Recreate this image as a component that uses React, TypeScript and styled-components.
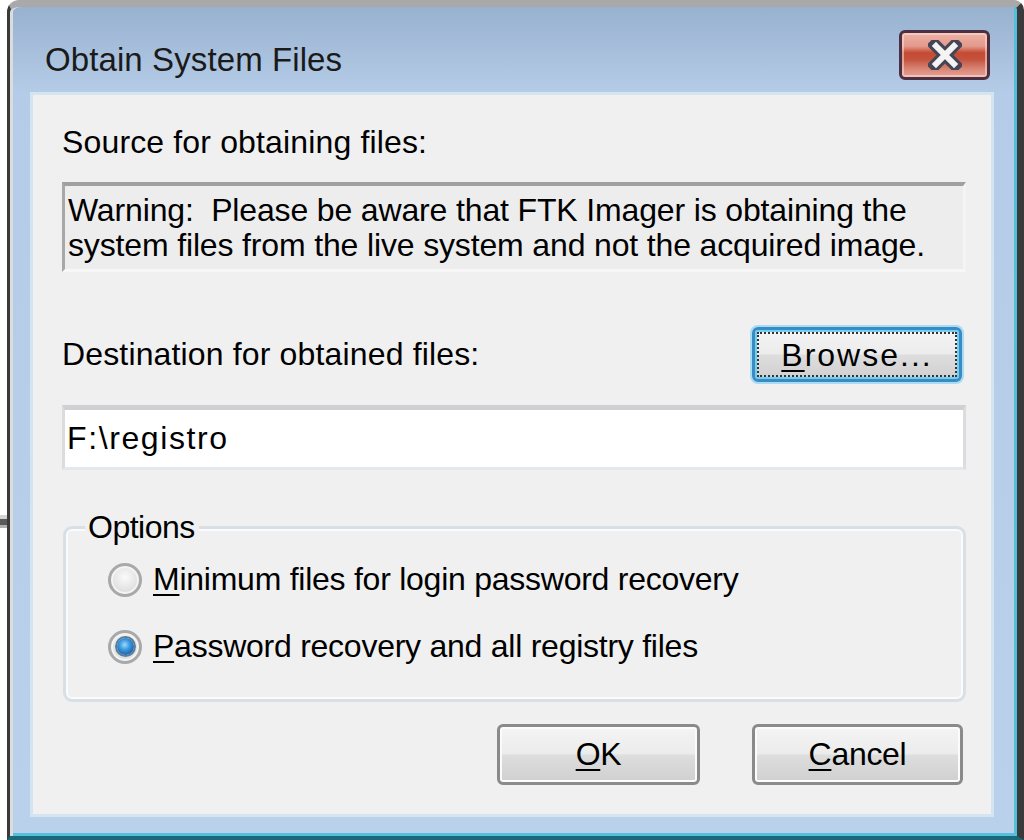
import React from "react";
import styled, { createGlobalStyle, css } from "styled-components";

const GlobalStyle = createGlobalStyle`
  html, body {
    margin: 0;
    padding: 0;
  }
  body {
    width: 1024px;
    height: 840px;
    overflow: hidden;
    background:
      linear-gradient(to bottom,
        transparent 0, transparent 515px,
        #d4d4d4 515px, #d4d4d4 519px,
        #5a5a5a 519px, #5a5a5a 525px,
        #b0b0b0 525px, #b0b0b0 528px,
        transparent 528px) no-repeat,
      #ffffff;
    font-family: "Liberation Sans", Arial, sans-serif;
  }
`;

const Window = styled.div`
  box-sizing: border-box;
  margin-left: 7px;
  width: 1017px;
  height: 840px;
  display: flex;
  flex-direction: column;
  border-top: 7px solid #a9a9a9;
  border-left: 3px solid #3a3a3a;
  border-right: 7px solid #3a3a3a;
  border-bottom: 4px solid #1a6878;
  border-top-left-radius: 12px;
  border-top-right-radius: 10px;
  background: linear-gradient(to bottom, #98b1cf 0px, #b4cce7 85px, #b9d1ea 100%);
  box-shadow: inset 3px 0 0 #dcdcdc, inset -3px -3px 0 #52c0dc;
  padding: 0 23px 19px 20px;
`;

const TitleBar = styled.div`
  height: 85px;
  flex: none;
  display: flex;
  align-items: flex-start;
  justify-content: space-between;
`;

const Title = styled.div`
  margin-top: 34px;
  margin-left: 15px;
  font-size: 33px;
  line-height: 38px;
  color: #1a1a1a;
  letter-spacing: 0.1px;
`;

const CloseButton = styled.div`
  box-sizing: border-box;
  margin-top: 23px;
  margin-right: 4px;
  width: 91px;
  height: 50px;
  border: 3px solid #4b2f42;
  border-radius: 6px;
  background: linear-gradient(
    to bottom,
    #eeb2a6 0%,
    #e39a8b 30%,
    #c44a33 45%,
    #c4533e 60%,
    #d78272 80%,
    #e6a397 100%
  );
  box-shadow: inset 0 0 0 2px rgba(255, 220, 210, 0.55);
  display: flex;
  align-items: center;
  justify-content: center;
`;

const Client = styled.div`
  flex: 1;
  box-sizing: border-box;
  background: #f0f0f0;
  border: 3px solid #d6e3f1;
  padding: 29px 25px 0 29px;
  display: flex;
  flex-direction: column;
`;

const Label = styled.div`
  font-size: 32px;
  line-height: 37px;
  color: #000;
  letter-spacing: 0.15px;
`;

const WarningBox = styled.div`
  box-sizing: border-box;
  margin-top: 21px;
  height: 90px;
  border-top: 4px solid #a0a0a0;
  border-left: 3px solid #a8a8a8;
  border-right: 3px solid #f4f4f4;
  border-bottom: 3px solid #f7f7f7;
  background: #ededed;
  padding: 7px 4px 0 3px;
  font-size: 32px;
  line-height: 35px;
  color: #000;
  letter-spacing: -0.15px;
  white-space: pre;
`;

const DestRow = styled.div`
  margin-top: 55px;
  display: flex;
  align-items: center;
  justify-content: space-between;
  padding-right: 4px;
`;

const buttonBase = css`
  box-sizing: border-box;
  height: 61px;
  border: 3px solid #8a8a8a;
  border-radius: 6px;
  background: linear-gradient(
    to bottom,
    #f4f4f4 0%,
    #ececec 48%,
    #dddddd 52%,
    #d0d0d0 100%
  );
  box-shadow: inset 0 0 0 2px #fbfbfb;
  font-family: "Liberation Sans", Arial, sans-serif;
  font-size: 32px;
  color: #000;
  letter-spacing: -0.3px;
  display: flex;
  align-items: center;
  justify-content: center;
  padding: 0;
`;

const BrowseButton = styled.button`
  ${buttonBase};
  width: 210px;
  height: 55px;
  border-color: #3a8ac4;
  box-shadow: 0 0 0 2px #a8dcf4, inset 0 0 0 2px #6fd0f2;
  outline: 2px dotted #333;
  outline-offset: -7px;
  padding-top: 2px;
  letter-spacing: 2px;
`;

const DialogButton = styled.button<{ $w: number }>`
  ${buttonBase};
  width: ${(p) => p.$w}px;
`;

const Mn = styled.span`
  text-decoration: underline;
  text-decoration-thickness: 2px;
  text-underline-offset: 4px;
`;

const Input = styled.div`
  box-sizing: border-box;
  margin-top: 23px;
  height: 65px;
  background: #fff;
  border: 3px solid #dadcdf;
  border-top: 5px solid #d0d0d2;
  border-bottom-color: #e3e8ee;
  display: flex;
  align-items: center;
  padding-left: 2px;
  font-size: 32px;
  color: #000;
  letter-spacing: 1.6px;
`;

const Group = styled.fieldset`
  box-sizing: border-box;
  margin: 39px 0 0 1px;
  padding: 15px 0 0 0;
  height: 193px;
  border: 3px solid #d8e0e6;
  border-radius: 9px;
  box-shadow: inset 0 0 0 2px #fafbfc;
  display: flex;
  flex-direction: column;
  gap: 30px;
`;

const Legend = styled.legend`
  margin-left: 19px;
  padding: 0 4px 0 3px;
  background: #f0f0f0;
  font-size: 32px;
  line-height: 37px;
  color: #000;
  letter-spacing: -0.5px;
`;

const RadioRow = styled.label`
  display: flex;
  align-items: center;
  gap: 11px;
  padding-left: 42px;
  font-size: 32px;
  line-height: 37px;
  color: #000;
  letter-spacing: -0.25px;
`;

const RadioCircle = styled.span<{ $checked?: boolean }>`
  box-sizing: border-box;
  flex: none;
  width: 34px;
  height: 34px;
  border-radius: 50%;
  border: 3px solid #a9a9a9;
  background: radial-gradient(circle at 50% 40%, #fafafa 0%, #e4e4e4 55%, #cfcfcf 100%);
  box-shadow: inset 0 0 0 2px #f4f4f4;
  display: flex;
  align-items: center;
  justify-content: center;
  &::after {
    content: "";
    display: ${(p) => (p.$checked ? "block" : "none")};
    width: 17px;
    height: 17px;
    border-radius: 50%;
    background: radial-gradient(circle at 45% 40%, #9fd8fb 0%, #3f9be0 35%, #1a62a8 75%, #154d85 100%);
    box-shadow: 0 0 0 2px #5a7d99;
  }
`;

const ButtonRow = styled.div`
  margin-top: 22px;
  display: flex;
  justify-content: flex-end;
  gap: 52px;
  padding-right: 3px;
`;

export default function App() {
  return (
    <>
      <GlobalStyle />
      <Window>
        <TitleBar>
          <Title>Obtain System Files</Title>
          <CloseButton>
            <svg width="34" height="30" viewBox="0 0 34 30">
              <path
                d="M7 5 L27 25 M27 5 L7 25"
                stroke="#454555"
                strokeWidth="12"
                strokeLinecap="square"
              />
              <path
                d="M8 6 L26 24 M26 6 L8 24"
                stroke="#f4f4f4"
                strokeWidth="6"
                strokeLinecap="square"
              />
            </svg>
          </CloseButton>
        </TitleBar>
        <Client>
          <Label>Source for obtaining files:</Label>
          <WarningBox>
            {"Warning:  Please be aware that FTK Imager is obtaining the\nsystem files from the live system and not the acquired image."}
          </WarningBox>
          <DestRow>
            <Label>Destination for obtained files:</Label>
            <BrowseButton>
              <Mn>B</Mn>rowse...
            </BrowseButton>
          </DestRow>
          <Input>F:\registro</Input>
          <Group>
            <Legend>Options</Legend>
            <RadioRow>
              <RadioCircle />
              <span>
                <Mn>M</Mn>inimum files for login password recovery
              </span>
            </RadioRow>
            <RadioRow>
              <RadioCircle $checked />
              <span>
                <Mn>P</Mn>assword recovery and all registry files
              </span>
            </RadioRow>
          </Group>
          <ButtonRow>
            <DialogButton $w={203}>
              <Mn>O</Mn>K
            </DialogButton>
            <DialogButton $w={211}>
              <Mn>C</Mn>ancel
            </DialogButton>
          </ButtonRow>
        </Client>
      </Window>
    </>
  );
}
